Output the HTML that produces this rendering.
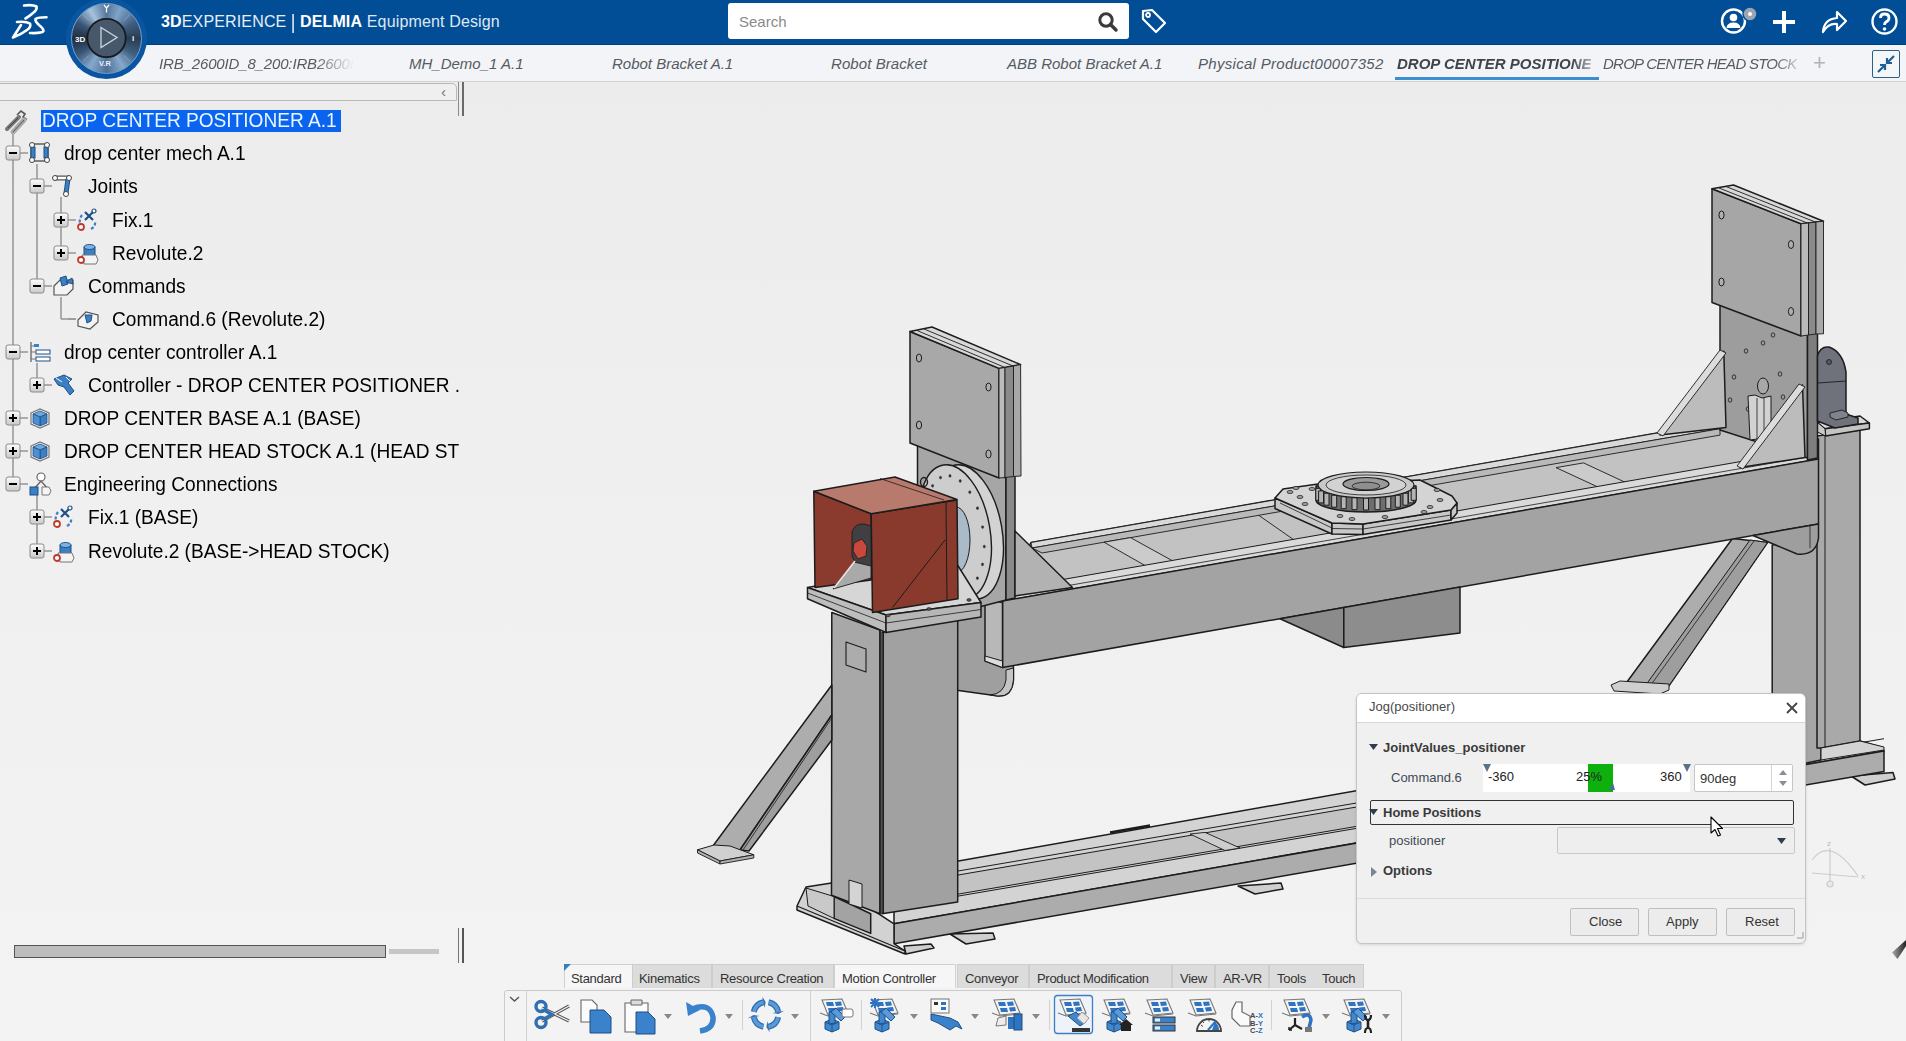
<!DOCTYPE html>
<html><head><meta charset="utf-8">
<style>
*{margin:0;padding:0;box-sizing:border-box}
html,body{width:1906px;height:1041px;overflow:hidden;background:linear-gradient(180deg,#ebebeb 0px,#efefef 400px,#f3f3f3 1041px);font-family:"Liberation Sans",sans-serif}
.a{position:absolute}
.tab{position:absolute;top:55px;font:italic 15px "Liberation Sans",sans-serif;color:#555b63;white-space:nowrap}
.tree{position:absolute;font:20px "Liberation Sans",sans-serif;color:#000;white-space:nowrap;transform:scaleX(0.955);transform-origin:0 0}
.btab{position:absolute;top:971px;font:13px "Liberation Sans",sans-serif;color:#333;white-space:nowrap;letter-spacing:-0.3px}
</style>

</head><body>
<svg class="a" style="left:0;top:0" width="1906" height="1041" viewBox="0 0 1906 1041"><polygon points="1851.0,776.0 1893.0,772.5 1895.0,779.0 1865.0,785.0" fill="#cfcfcf" stroke="#1c1c1c" stroke-width="1.5" stroke-linejoin="round" /><polygon points="950.0,934.0 993.0,933.0 995.0,939.0 966.0,944.0" fill="#cfcfcf" stroke="#1c1c1c" stroke-width="1.5" stroke-linejoin="round" /><polygon points="1238.0,886.0 1281.0,883.0 1283.0,889.0 1255.0,894.0" fill="#cfcfcf" stroke="#1c1c1c" stroke-width="1.5" stroke-linejoin="round" /><polygon points="904.0,946.0 931.0,944.0 934.0,948.0 906.0,954.0" fill="#cfcfcf" stroke="#1c1c1c" stroke-width="1.5" stroke-linejoin="round" /><polygon points="957.0,861.2 1772.0,717.3 1860.0,741.0 1882.0,747.5 1884.0,750.9 894.0,923.8 894.0,905.0" fill="#d3d3d3" stroke="#1c1c1c" stroke-width="1.5" stroke-linejoin="round" /><polygon points="957.0,875.2 1772.0,736.1 1772.0,755.8 957.0,894.3" fill="#c3c3c3" stroke="#1c1c1c" stroke-width="1.0" stroke-linejoin="round" /><line x1="957.0" y1="871.2" x2="1772.0" y2="732.1" stroke="#1c1c1c" stroke-width="1.0"/><line x1="894.0" y1="907.0" x2="1884.0" y2="738.7" stroke="#1c1c1c" stroke-width="1.0"/><polygon points="1190.0,834.0 1205.0,832.4 1240.0,848.0 1225.0,850.5" fill="#cdcdcd" stroke="#1c1c1c" stroke-width="0.9" stroke-linejoin="round" /><polygon points="894.0,923.8 1884.0,750.9 1884.0,771.4 894.0,943.7" fill="#acacac" stroke="#1c1c1c" stroke-width="1.5" stroke-linejoin="round" /><line x1="1110.0" y1="832.5" x2="1150.0" y2="825.5" stroke="#1c1c1c" stroke-width="2.5"/><polygon points="797.0,906.0 806.0,887.0 831.5,883.0 894.0,923.8 894.0,943.7 905.0,951.0 905.0,954.0 797.0,910.0" fill="#d2d2d2" stroke="#1c1c1c" stroke-width="1.5" stroke-linejoin="round" /><polygon points="834.0,896.5 870.7,913.8 870.7,933.4 834.0,918.4" fill="#a3a3a3" stroke="#1c1c1c" stroke-width="1.5" stroke-linejoin="round" /><polygon points="806.0,888.0 834.0,896.5 834.0,918.4 808.0,906.0" fill="#c9c9c9" stroke="#1c1c1c" stroke-width="1.0" stroke-linejoin="round" /><line x1="797.0" y1="906.0" x2="905.0" y2="951.0" stroke="#1c1c1c" stroke-width="1.2"/><polygon points="1732.5,538.5 1767.5,542.5 1666.0,690.0 1622.5,688.0" fill="#adadad" stroke="#1c1c1c" stroke-width="1.5" stroke-linejoin="round" /><polygon points="1750.0,540.0 1767.5,542.5 1666.0,690.0 1643.0,689.0" fill="#9e9e9e" stroke="#1c1c1c" stroke-width="1.0" stroke-linejoin="round" /><line x1="1754.0" y1="541.0" x2="1648.0" y2="689.0" stroke="#1c1c1c" stroke-width="0.8"/><polygon points="1611.0,685.0 1620.0,681.0 1669.0,684.0 1669.0,690.0 1660.0,694.0 1614.0,691.0" fill="#cfcfcf" stroke="#1c1c1c" stroke-width="1.0" stroke-linejoin="round" /><polygon points="1772.2,545.0 1821.0,535.0 1821.0,760.0 1772.2,770.0" fill="#a6a6a6" stroke="#1c1c1c" stroke-width="1.5" stroke-linejoin="round" /><polygon points="1817.0,436.0 1860.0,430.0 1860.0,741.0 1821.0,748.0 1817.0,748.0" fill="#a9a9a9" stroke="#1c1c1c" stroke-width="1.5" stroke-linejoin="round" /><line x1="1825.0" y1="436.0" x2="1825.0" y2="747.0" stroke="#1c1c1c" stroke-width="1.0"/><polygon points="1817.5,422.5 1860.0,416.0 1869.4,423.0 1825.0,428.8" fill="#dadada" stroke="#1c1c1c" stroke-width="1.5" stroke-linejoin="round" /><polygon points="1825.0,428.8 1869.4,423.0 1869.4,428.8 1825.6,436.0" fill="#c4c4c4" stroke="#1c1c1c" stroke-width="1.5" stroke-linejoin="round" /><polygon points="1817.5,422.5 1825.0,428.8 1825.6,436.0 1817.5,432.0" fill="#c8c8c8" stroke="#1c1c1c" stroke-width="1.0" stroke-linejoin="round" /><polygon points="1860.0,741.0 1884.0,747.0 1884.0,750.0 1821.0,760.0 1821.0,748.0" fill="#d3d3d3" stroke="#1c1c1c" stroke-width="1.0" stroke-linejoin="round" /><path d="M950,600 L1006,598 L1013.5,668 L1013.5,680 Q1012,697 998,696 L955,690 Z" fill="#9f9f9f" stroke="#1c1c1c" stroke-width="1.5" stroke-linejoin="round"/><path d="M1006,670 L1013.5,668 L1013.5,680 Q1012,697 998,696 L990,695 Q1004,694 1006,680 Z" fill="#c4c4c4" stroke="#1c1c1c" stroke-width="1.0" stroke-linejoin="round"/><polygon points="1031.0,542.5 1720.0,422.1 1818.5,439.0 1818.5,459.0 1002.5,601.0 1002.5,596.0" fill="#c2c2c2" stroke="#1c1c1c" stroke-width="1.5" stroke-linejoin="round" /><polygon points="1031.0,542.5 1720.0,422.1 1720.0,428.7 1032.0,548.0" fill="#d9d9d9" stroke="#1c1c1c" stroke-width="0.9" stroke-linejoin="round" /><polygon points="1032.0,548.0 1720.0,428.7 1720.0,435.1 1042.0,553.0" fill="#b9b9b9" stroke="#1c1c1c" stroke-width="0.9" stroke-linejoin="round" /><polygon points="1104.0,542.2 1130.5,537.6 1175.0,562.2 1147.5,566.9" fill="#cbcbcb" stroke="#1c1c1c" stroke-width="0.9" stroke-linejoin="round" /><line x1="1258.7" y1="515.3" x2="1297.7" y2="542.5" stroke="#1c1c1c" stroke-width="0.9"/><polygon points="1556.0,467.6 1583.5,462.9 1631.0,485.0 1603.5,489.6" fill="#cbcbcb" stroke="#1c1c1c" stroke-width="0.9" stroke-linejoin="round" /><polygon points="1002.5,590.0 1818.5,448.0 1818.5,459.0 1002.5,601.0" fill="#dadada" stroke="#1c1c1c" stroke-width="1.0" stroke-linejoin="round" /><line x1="1002.5" y1="597.0" x2="1818.5" y2="455.0" stroke="#1c1c1c" stroke-width="0.8"/><polygon points="1002.5,601.0 1818.5,459.0 1818.5,524.0 1002.5,667.5" fill="#a3a3a3" stroke="#1c1c1c" stroke-width="1.5" stroke-linejoin="round" /><polygon points="985.0,596.0 1002.5,601.0 1002.5,667.5 985.0,661.0" fill="#b8b8b8" stroke="#1c1c1c" stroke-width="1.5" stroke-linejoin="round" /><polygon points="985.0,656.0 1002.5,661.0 1002.5,667.5 985.0,661.0" fill="#dcdcdc" stroke="#1c1c1c" stroke-width="1.0" stroke-linejoin="round" /><line x1="985.0" y1="598.0" x2="1002.5" y2="603.0" stroke="#1c1c1c" stroke-width="1.0"/><polygon points="1280.0,618.7 1343.8,607.5 1343.8,647.5" fill="#8b8b8b" stroke="#1c1c1c" stroke-width="1.5" stroke-linejoin="round" /><polygon points="1343.8,607.5 1460.0,587.0 1460.0,633.0 1343.8,647.5" fill="#8d8d8d" stroke="#1c1c1c" stroke-width="1.5" stroke-linejoin="round" /><path d="M1753,535.5 L1818.5,524.0 L1818.5,538 Q1816,556 1797,554 Z" fill="#9e9e9e" stroke="#1c1c1c" stroke-width="1.5" stroke-linejoin="round"/><line x1="1810.0" y1="525.5" x2="1810.0" y2="548.0" stroke="#1c1c1c" stroke-width="0.8"/><polygon points="1275.0,498.0 1332.0,523.0 1332.0,534.0 1275.0,508.5" fill="#c8c8c8" stroke="#1c1c1c" stroke-width="1.5" stroke-linejoin="round" /><polygon points="1332.0,523.0 1363.0,524.0 1363.0,534.5 1332.0,534.0" fill="#c8c8c8" stroke="#1c1c1c" stroke-width="1.5" stroke-linejoin="round" /><polygon points="1363.0,524.0 1451.0,510.0 1451.0,520.0 1363.0,534.5" fill="#c8c8c8" stroke="#1c1c1c" stroke-width="1.5" stroke-linejoin="round" /><polygon points="1451.0,510.0 1457.0,503.0 1457.0,513.0 1451.0,520.0" fill="#c8c8c8" stroke="#1c1c1c" stroke-width="1.5" stroke-linejoin="round" /><polygon points="1283.0,489.0 1318.0,484.0 1420.0,480.0 1452.0,496.0 1457.0,503.0 1451.0,510.0 1363.0,524.0 1332.0,523.0 1275.0,498.0" fill="#d4d4d4" stroke="#1c1c1c" stroke-width="1.5" stroke-linejoin="round" /><line x1="1280.0" y1="503.0" x2="1332.0" y2="528.0" stroke="#1c1c1c" stroke-width="0.8"/><line x1="1332.0" y1="528.5" x2="1363.0" y2="529.0" stroke="#1c1c1c" stroke-width="0.8"/><line x1="1363.0" y1="529.0" x2="1451.0" y2="515.0" stroke="#1c1c1c" stroke-width="0.8"/><path d="M1316,486 L1316,500 A50,12 0 0 0 1416,500 L1416,486 Z" fill="#6e6e6e" stroke="#1c1c1c" stroke-width="1.5" stroke-linejoin="round"/><polygon points="1315.8,488.3 1320.8,488.3 1320.8,500.3 1315.8,500.3" fill="#b4b4b4" stroke="#1c1c1c" stroke-width="1.0" stroke-linejoin="round" /><polygon points="1318.6,490.9 1323.6,490.9 1323.6,502.9 1318.6,502.9" fill="#b4b4b4" stroke="#1c1c1c" stroke-width="1.0" stroke-linejoin="round" /><polygon points="1324.0,493.2 1329.0,493.2 1329.0,505.2 1324.0,505.2" fill="#b4b4b4" stroke="#1c1c1c" stroke-width="1.0" stroke-linejoin="round" /><polygon points="1331.7,495.2 1336.7,495.2 1336.7,507.2 1331.7,507.2" fill="#b4b4b4" stroke="#1c1c1c" stroke-width="1.0" stroke-linejoin="round" /><polygon points="1341.2,496.7 1346.2,496.7 1346.2,508.7 1341.2,508.7" fill="#b4b4b4" stroke="#1c1c1c" stroke-width="1.0" stroke-linejoin="round" /><polygon points="1352.0,497.7 1357.0,497.7 1357.0,509.7 1352.0,509.7" fill="#b4b4b4" stroke="#1c1c1c" stroke-width="1.0" stroke-linejoin="round" /><polygon points="1363.5,498.0 1368.5,498.0 1368.5,510.0 1363.5,510.0" fill="#b4b4b4" stroke="#1c1c1c" stroke-width="1.0" stroke-linejoin="round" /><polygon points="1375.0,497.7 1380.0,497.7 1380.0,509.7 1375.0,509.7" fill="#b4b4b4" stroke="#1c1c1c" stroke-width="1.0" stroke-linejoin="round" /><polygon points="1385.8,496.7 1390.8,496.7 1390.8,508.7 1385.8,508.7" fill="#b4b4b4" stroke="#1c1c1c" stroke-width="1.0" stroke-linejoin="round" /><polygon points="1395.3,495.2 1400.3,495.2 1400.3,507.2 1395.3,507.2" fill="#b4b4b4" stroke="#1c1c1c" stroke-width="1.0" stroke-linejoin="round" /><polygon points="1403.0,493.2 1408.0,493.2 1408.0,505.2 1403.0,505.2" fill="#b4b4b4" stroke="#1c1c1c" stroke-width="1.0" stroke-linejoin="round" /><polygon points="1408.4,490.9 1413.4,490.9 1413.4,502.9 1408.4,502.9" fill="#b4b4b4" stroke="#1c1c1c" stroke-width="1.0" stroke-linejoin="round" /><polygon points="1411.2,488.3 1416.2,488.3 1416.2,500.3 1411.2,500.3" fill="#b4b4b4" stroke="#1c1c1c" stroke-width="1.0" stroke-linejoin="round" /><ellipse cx="1366" cy="485" rx="48" ry="13" fill="#c9c9c9" stroke="#1c1c1c" stroke-width="1.2"/><ellipse cx="1366" cy="485" rx="40" ry="10" fill="#d2d2d2" stroke="#1c1c1c" stroke-width="0.8"/><ellipse cx="1366" cy="484" rx="23" ry="6.5" fill="#9a9a9a" stroke="#1c1c1c" stroke-width="1.2"/><ellipse cx="1366" cy="486" rx="14" ry="3.8" fill="#8f8f8f" stroke="#1c1c1c" stroke-width="0.8"/><ellipse cx="1290" cy="492" rx="3" ry="1.6" fill="#9a9a9a" stroke="#1c1c1c" stroke-width="0.7"/><ellipse cx="1300" cy="497" rx="3" ry="1.6" fill="#9a9a9a" stroke="#1c1c1c" stroke-width="0.7"/><ellipse cx="1296" cy="488" rx="3" ry="1.6" fill="#9a9a9a" stroke="#1c1c1c" stroke-width="0.7"/><ellipse cx="1312" cy="489" rx="3" ry="1.6" fill="#9a9a9a" stroke="#1c1c1c" stroke-width="0.7"/><ellipse cx="1305" cy="504" rx="3" ry="1.6" fill="#9a9a9a" stroke="#1c1c1c" stroke-width="0.7"/><ellipse cx="1340" cy="516" rx="3" ry="1.6" fill="#9a9a9a" stroke="#1c1c1c" stroke-width="0.7"/><ellipse cx="1352" cy="519" rx="3" ry="1.6" fill="#9a9a9a" stroke="#1c1c1c" stroke-width="0.7"/><ellipse cx="1385" cy="517" rx="3" ry="1.6" fill="#9a9a9a" stroke="#1c1c1c" stroke-width="0.7"/><ellipse cx="1430" cy="507" rx="3" ry="1.6" fill="#9a9a9a" stroke="#1c1c1c" stroke-width="0.7"/><ellipse cx="1440" cy="500" rx="3" ry="1.6" fill="#9a9a9a" stroke="#1c1c1c" stroke-width="0.7"/><ellipse cx="1437" cy="490" rx="3" ry="1.6" fill="#9a9a9a" stroke="#1c1c1c" stroke-width="0.7"/><ellipse cx="1424" cy="512" rx="3" ry="1.6" fill="#9a9a9a" stroke="#1c1c1c" stroke-width="0.7"/><polygon points="1720.0,300.0 1807.5,330.0 1807.5,458.0 1720.0,430.0" fill="#9d9d9d" stroke="#1c1c1c" stroke-width="1.5" stroke-linejoin="round" /><ellipse cx="1746" cy="351" rx="1.8" ry="2.2" fill="#9d9d9d" stroke="#1c1c1c" stroke-width="0.8"/><ellipse cx="1763" cy="343" rx="1.8" ry="2.2" fill="#9d9d9d" stroke="#1c1c1c" stroke-width="0.8"/><ellipse cx="1773" cy="335" rx="1.8" ry="2.2" fill="#9d9d9d" stroke="#1c1c1c" stroke-width="0.8"/><ellipse cx="1734" cy="377" rx="1.8" ry="2.2" fill="#9d9d9d" stroke="#1c1c1c" stroke-width="0.8"/><ellipse cx="1730" cy="400" rx="1.8" ry="2.2" fill="#9d9d9d" stroke="#1c1c1c" stroke-width="0.8"/><ellipse cx="1780" cy="374" rx="1.8" ry="2.2" fill="#9d9d9d" stroke="#1c1c1c" stroke-width="0.8"/><ellipse cx="1783" cy="397" rx="1.8" ry="2.2" fill="#9d9d9d" stroke="#1c1c1c" stroke-width="0.8"/><ellipse cx="1748" cy="409" rx="1.8" ry="2.2" fill="#9d9d9d" stroke="#1c1c1c" stroke-width="0.8"/><ellipse cx="1763" cy="386" rx="5.5" ry="8" fill="#a8a8a8" stroke="#1c1c1c" stroke-width="1.0"/><polygon points="1748.0,396.0 1755.0,395.0 1762.0,398.0 1771.0,396.0 1771.0,437.0 1750.0,440.0" fill="#d2d2d2" stroke="#1c1c1c" stroke-width="1.0" stroke-linejoin="round" /><line x1="1757.0" y1="398.0" x2="1757.0" y2="439.0" stroke="#1c1c1c" stroke-width="0.8"/><line x1="1764.0" y1="398.0" x2="1764.0" y2="438.0" stroke="#1c1c1c" stroke-width="0.8"/><polygon points="1807.5,224.0 1817.5,222.0 1817.5,458.0 1807.5,460.0" fill="#7e7e7e" stroke="#1c1c1c" stroke-width="1.5" stroke-linejoin="round" /><polygon points="1712.0,188.8 1801.0,223.8 1801.0,336.0 1712.0,302.5" fill="#a6a6a6" stroke="#1c1c1c" stroke-width="1.5" stroke-linejoin="round" /><polygon points="1712.0,188.8 1733.5,185.0 1823.5,221.2 1801.0,223.8" fill="#d8d8d8" stroke="#1c1c1c" stroke-width="1.5" stroke-linejoin="round" /><line x1="1719.0" y1="188.0" x2="1808.0" y2="223.3" stroke="#1c1c1c" stroke-width="0.9"/><line x1="1726.0" y1="186.5" x2="1816.0" y2="222.3" stroke="#1c1c1c" stroke-width="0.9"/><polygon points="1801.0,223.8 1808.5,223.0 1808.5,335.0 1801.0,336.0" fill="#b9b9b9" stroke="#1c1c1c" stroke-width="0.9" stroke-linejoin="round" /><polygon points="1808.5,223.0 1816.0,222.0 1816.0,334.0 1808.5,335.0" fill="#8a8a8a" stroke="#1c1c1c" stroke-width="0.9" stroke-linejoin="round" /><polygon points="1816.0,222.0 1823.5,221.2 1823.5,333.8 1816.0,334.0" fill="#a9a9a9" stroke="#1c1c1c" stroke-width="0.9" stroke-linejoin="round" /><ellipse cx="1721.5" cy="215" rx="2.6" ry="4" fill="#b0b0b0" stroke="#1c1c1c" stroke-width="1.0"/><ellipse cx="1791" cy="244.5" rx="2.6" ry="4" fill="#b0b0b0" stroke="#1c1c1c" stroke-width="1.0"/><ellipse cx="1721.5" cy="282" rx="2.6" ry="4" fill="#b0b0b0" stroke="#1c1c1c" stroke-width="1.0"/><ellipse cx="1791" cy="311.5" rx="2.6" ry="4" fill="#b0b0b0" stroke="#1c1c1c" stroke-width="1.0"/><polygon points="1723.8,351.2 1660.0,435.0 1726.0,427.5" fill="#bcbcbc" stroke="#1c1c1c" stroke-width="1.5" stroke-linejoin="round" /><polygon points="1720.0,350.0 1726.0,353.0 1663.0,436.0 1657.0,433.0" fill="#dcdcdc" stroke="#1c1c1c" stroke-width="0.9" stroke-linejoin="round" /><polygon points="1802.5,385.0 1740.0,467.5 1805.0,457.5" fill="#bcbcbc" stroke="#1c1c1c" stroke-width="1.5" stroke-linejoin="round" /><polygon points="1799.0,384.0 1805.0,387.0 1743.0,469.0 1737.0,466.0" fill="#dcdcdc" stroke="#1c1c1c" stroke-width="0.9" stroke-linejoin="round" /><path d="M1817.5,421 L1817.5,356 Q1820,346 1829,347 Q1843,352 1846,372 L1846,414 L1858,418 L1858,424 L1835,428 Z" fill="#6f727a" stroke="#1c1c1c" stroke-width="1.5" stroke-linejoin="round"/><line x1="1818.0" y1="383.0" x2="1846.0" y2="381.0" stroke="#1c1c1c" stroke-width="0.9"/><ellipse cx="1829" cy="362" rx="2.5" ry="2.5" fill="#55585e" stroke="#1c1c1c" stroke-width="0.8"/><polygon points="1830.0,413.0 1842.0,410.0 1848.0,413.0 1848.0,417.0 1836.0,420.0 1830.0,417.0" fill="#80838a" stroke="#1c1c1c" stroke-width="0.9" stroke-linejoin="round" /><polygon points="917.5,440.0 1006.0,478.0 1006.0,600.0 960.0,612.0 917.5,600.0" fill="#a6a6a6" stroke="#1c1c1c" stroke-width="1.5" stroke-linejoin="round" /><polygon points="1006.0,372.0 1015.0,370.0 1015.0,598.0 1006.0,600.0" fill="#8a8a8a" stroke="#1c1c1c" stroke-width="1.5" stroke-linejoin="round" /><polygon points="1015.0,531.0 1015.0,596.0 1072.5,587.5" fill="#b2b2b2" stroke="#1c1c1c" stroke-width="1.5" stroke-linejoin="round" /><polygon points="910.0,331.5 999.0,368.4 999.0,478.0 910.0,443.0" fill="#a8a8a8" stroke="#1c1c1c" stroke-width="1.5" stroke-linejoin="round" /><polygon points="910.0,331.5 932.0,327.0 1020.6,364.6 999.0,368.4" fill="#d8d8d8" stroke="#1c1c1c" stroke-width="1.5" stroke-linejoin="round" /><line x1="917.0" y1="330.5" x2="1005.0" y2="367.5" stroke="#1c1c1c" stroke-width="0.9"/><line x1="924.0" y1="329.0" x2="1013.0" y2="366.0" stroke="#1c1c1c" stroke-width="0.9"/><polygon points="999.0,368.4 1005.0,367.5 1005.0,477.5 999.0,478.0" fill="#bbbbbb" stroke="#1c1c1c" stroke-width="0.9" stroke-linejoin="round" /><polygon points="1005.0,367.5 1013.5,366.0 1013.5,476.5 1005.0,477.5" fill="#8a8a8a" stroke="#1c1c1c" stroke-width="0.9" stroke-linejoin="round" /><polygon points="1013.5,366.0 1020.6,364.6 1021.0,476.0 1013.5,476.5" fill="#a8a8a8" stroke="#1c1c1c" stroke-width="0.9" stroke-linejoin="round" /><ellipse cx="919" cy="358" rx="2.6" ry="4" fill="#acacac" stroke="#1c1c1c" stroke-width="1.0"/><ellipse cx="988.5" cy="387" rx="2.6" ry="4" fill="#acacac" stroke="#1c1c1c" stroke-width="1.0"/><ellipse cx="919" cy="425" rx="2.6" ry="4" fill="#acacac" stroke="#1c1c1c" stroke-width="1.0"/><ellipse cx="988.5" cy="454" rx="2.6" ry="4" fill="#acacac" stroke="#1c1c1c" stroke-width="1.0"/><ellipse cx="967" cy="532" rx="35" ry="68" fill="#d3d3d3" stroke="#1c1c1c" stroke-width="1.4" transform="rotate(-10 967 532)"/><ellipse cx="955" cy="532" rx="35" ry="68" fill="#cdcdcd" stroke="#1c1c1c" stroke-width="1.4" transform="rotate(-10 955 532)"/><ellipse cx="982.6" cy="527.1" rx="1.1" ry="1.4" fill="#333" stroke="#1c1c1c" stroke-width="0.4"/><ellipse cx="984.3" cy="546.6" rx="1.1" ry="1.4" fill="#333" stroke="#1c1c1c" stroke-width="0.4"/><ellipse cx="982.5" cy="564.4" rx="1.1" ry="1.4" fill="#333" stroke="#1c1c1c" stroke-width="0.4"/><ellipse cx="977.4" cy="578.2" rx="1.1" ry="1.4" fill="#333" stroke="#1c1c1c" stroke-width="0.4"/><ellipse cx="969.5" cy="586.4" rx="1.1" ry="1.4" fill="#333" stroke="#1c1c1c" stroke-width="0.4"/><ellipse cx="960.0" cy="588.1" rx="1.1" ry="1.4" fill="#333" stroke="#1c1c1c" stroke-width="0.4"/><ellipse cx="949.8" cy="583.0" rx="1.1" ry="1.4" fill="#333" stroke="#1c1c1c" stroke-width="0.4"/><ellipse cx="940.2" cy="571.8" rx="1.1" ry="1.4" fill="#333" stroke="#1c1c1c" stroke-width="0.4"/><ellipse cx="932.5" cy="555.8" rx="1.1" ry="1.4" fill="#333" stroke="#1c1c1c" stroke-width="0.4"/><ellipse cx="927.4" cy="536.9" rx="1.1" ry="1.4" fill="#333" stroke="#1c1c1c" stroke-width="0.4"/><ellipse cx="925.7" cy="517.4" rx="1.1" ry="1.4" fill="#333" stroke="#1c1c1c" stroke-width="0.4"/><ellipse cx="927.5" cy="499.6" rx="1.1" ry="1.4" fill="#333" stroke="#1c1c1c" stroke-width="0.4"/><ellipse cx="932.6" cy="485.8" rx="1.1" ry="1.4" fill="#333" stroke="#1c1c1c" stroke-width="0.4"/><ellipse cx="940.5" cy="477.6" rx="1.1" ry="1.4" fill="#333" stroke="#1c1c1c" stroke-width="0.4"/><ellipse cx="950.0" cy="475.9" rx="1.1" ry="1.4" fill="#333" stroke="#1c1c1c" stroke-width="0.4"/><ellipse cx="960.2" cy="481.0" rx="1.1" ry="1.4" fill="#333" stroke="#1c1c1c" stroke-width="0.4"/><ellipse cx="969.8" cy="492.2" rx="1.1" ry="1.4" fill="#333" stroke="#1c1c1c" stroke-width="0.4"/><ellipse cx="977.5" cy="508.2" rx="1.1" ry="1.4" fill="#333" stroke="#1c1c1c" stroke-width="0.4"/><ellipse cx="956" cy="540" rx="14" ry="33" fill="#a9bac8" stroke="#1c1c1c" stroke-width="1.0"/><polygon points="831.8,612.5 880.0,630.0 880.0,913.8 831.5,895.3" fill="#a8a8a8" stroke="#1c1c1c" stroke-width="1.5" stroke-linejoin="round" /><polygon points="882.0,632.5 957.7,619.5 957.7,902.0 882.0,913.8" fill="#a1a1a1" stroke="#1c1c1c" stroke-width="1.5" stroke-linejoin="round" /><line x1="880.0" y1="630.0" x2="880.0" y2="913.8" stroke="#1c1c1c" stroke-width="1.4"/><line x1="883.5" y1="632.0" x2="883.5" y2="913.5" stroke="#1c1c1c" stroke-width="1.0"/><polygon points="846.0,642.0 866.0,649.0 866.0,672.0 846.0,665.0" fill="#acacac" stroke="#1c1c1c" stroke-width="1.1" stroke-linejoin="round" /><polygon points="849.0,880.0 862.0,884.0 862.0,908.0 849.0,904.0" fill="#d4d4d4" stroke="#1c1c1c" stroke-width="1.0" stroke-linejoin="round" /><polygon points="807.5,587.5 955.0,561.0 981.0,602.5 886.0,615.0" fill="#d6d6d6" stroke="#1c1c1c" stroke-width="1.5" stroke-linejoin="round" /><polygon points="807.5,587.5 886.0,615.0 886.0,632.5 807.5,598.8" fill="#bdbdbd" stroke="#1c1c1c" stroke-width="1.5" stroke-linejoin="round" /><polygon points="886.0,615.0 981.0,602.5 981.0,617.0 886.0,632.5" fill="#b6b6b6" stroke="#1c1c1c" stroke-width="1.5" stroke-linejoin="round" /><line x1="807.5" y1="593.0" x2="886.0" y2="623.0" stroke="#1c1c1c" stroke-width="0.8"/><line x1="886.0" y1="623.0" x2="981.0" y2="609.5" stroke="#1c1c1c" stroke-width="0.8"/><ellipse cx="888" cy="615.5" rx="2.2" ry="1.4" fill="#555" stroke="#1c1c1c" stroke-width="0.6"/><ellipse cx="969" cy="600" rx="2.2" ry="1.4" fill="#555" stroke="#1c1c1c" stroke-width="0.6"/><ellipse cx="929" cy="609" rx="2.2" ry="1.4" fill="#555" stroke="#1c1c1c" stroke-width="0.6"/><polygon points="813.8,491.2 871.2,513.8 871.2,580.0 815.0,587.5" fill="#8b3b2e" stroke="#1c1c1c" stroke-width="1.5" stroke-linejoin="round" /><path d="M852,532 Q855,523 864,524 L871.25,526 L871.25,570 Q858,572 852,556 Z" fill="#404042" stroke="#1c1c1c" stroke-width="0.9" stroke-linejoin="round"/><polygon points="854.0,543.0 862.0,539.0 867.0,546.0 866.0,556.0 858.0,559.0 853.0,551.0" fill="#c9473b" stroke="#1c1c1c" stroke-width="0.8" stroke-linejoin="round" /><polygon points="833.0,589.0 854.0,562.0 871.0,566.0 871.0,578.0" fill="#a9a9a9" stroke="#1c1c1c" stroke-width="0.9" stroke-linejoin="round" /><line x1="834.0" y1="588.0" x2="855.0" y2="561.0" stroke="#e6e6e6" stroke-width="1.6"/><polygon points="871.2,513.8 957.0,500.0 958.0,598.8 872.5,612.5" fill="#893a2d" stroke="#1c1c1c" stroke-width="1.5" stroke-linejoin="round" /><line x1="892.5" y1="607.5" x2="945.0" y2="540.0" stroke="#1c1c1c" stroke-width="1.0"/><line x1="946.0" y1="501.5" x2="947.0" y2="600.0" stroke="#1c1c1c" stroke-width="1.0"/><polygon points="813.8,491.2 895.0,477.0 957.0,499.5 871.2,513.8" fill="#b97a6e" stroke="#1c1c1c" stroke-width="1.5" stroke-linejoin="round" /><line x1="880.0" y1="478.5" x2="944.0" y2="500.0" stroke="#1c1c1c" stroke-width="0.8"/><ellipse cx="924" cy="482" rx="3.5" ry="4.5" fill="none" stroke="#1c1c1c" stroke-width="1.4"/><polygon points="831.8,685.0 831.8,715.0 740.0,850.0 710.0,850.0" fill="#adadad" stroke="#1c1c1c" stroke-width="1.5" stroke-linejoin="round" /><polygon points="831.8,715.0 831.8,740.0 749.0,851.0 740.0,850.0" fill="#9e9e9e" stroke="#1c1c1c" stroke-width="1.5" stroke-linejoin="round" /><line x1="831.8" y1="718.0" x2="743.0" y2="850.0" stroke="#1c1c1c" stroke-width="0.8"/><polygon points="697.5,849.8 714.0,845.0 730.0,846.0 753.8,854.8 720.0,861.0" fill="#d0d0d0" stroke="#1c1c1c" stroke-width="1.0" stroke-linejoin="round" /><polygon points="697.5,849.8 720.0,861.0 720.0,864.0 697.5,853.0" fill="#b0b0b0" stroke="#1c1c1c" stroke-width="0.9" stroke-linejoin="round" /><polygon points="720.0,861.0 753.8,854.8 753.8,858.0 720.0,864.0" fill="#b0b0b0" stroke="#1c1c1c" stroke-width="0.9" stroke-linejoin="round" /><g stroke="#c8c8c8" stroke-width="1.2" fill="none" opacity="0.9"><path d="M1812,860 Q1830,835 1858,876"/><line x1="1830" y1="848" x2="1830" y2="885"/><line x1="1812" y1="873" x2="1858" y2="877"/><circle cx="1830" cy="884" r="3" fill="#e8e8e8"/></g><text x="1827" y="846" font-size="8" fill="#bbb" font-family="Liberation Sans">z</text><text x="1861" y="879" font-size="8" fill="#bbb" font-family="Liberation Sans">x</text></svg>
<!-- HEADER -->
<div class="a" style="left:0;top:0;width:1906px;height:45px;background:#024e96;border-bottom:1px solid #013f7c"></div>
<div class="a" style="left:0;top:45px;width:1906px;height:37px;background:#f2f4f7;border-bottom:1px solid #d0d3d6"></div>
<!-- 3DS logo -->
<svg class="a" style="left:0;top:0" width="60" height="45" viewBox="0 0 60 45">
<g fill="none" stroke="#fff" stroke-linecap="round" stroke-linejoin="round">
<path d="M24,5.5 Q33,4.5 36.5,6.5 Q37.5,10 33,13 Q29,16.5 25.5,18.5" stroke-width="2.6"/>
<path d="M17,22 Q26,21 30,23.5 Q31.5,27 27,30 Q21,34.5 13,37.5 L21,25" stroke-width="2.6"/>
<path d="M46.5,17.3 Q38,17.3 35.5,19 Q35,21.5 39,25 Q43.5,28.5 43.5,31 Q42,33.5 30,33" stroke-width="2.6"/>
</g></svg>
<!-- compass -->
<div class="a" style="left:66px;top:-2px;width:81px;height:81px;border-radius:50%;background:#0a55a0"></div>
<div class="a" style="left:71px;top:3px;width:71px;height:71px;border-radius:50%;border:1px solid #6f9fd0;background:conic-gradient(from 0deg,#54769a 0deg,#7fa3c6 25deg,#3f5f80 60deg,#2a3c52 90deg,#3f5f80 120deg,#86a9cb 150deg,#4f7193 180deg,#86a9cb 210deg,#3a5778 240deg,#1f2d3d 270deg,#3a5778 300deg,#a6c3de 330deg,#54769a 360deg)"></div>
<svg class="a" style="left:64px;top:-4px" width="86" height="86" viewBox="0 0 86 86">
<g stroke="#a9c4de" stroke-width="0.8" opacity="0.7"><line x1="19" y1="18.5" x2="25" y2="24.5"/><line x1="66" y1="18.5" x2="60" y2="24.5"/><line x1="19" y1="65.5" x2="25" y2="59.5"/><line x1="66" y1="65.5" x2="60" y2="59.5"/></g>
<circle cx="42.5" cy="42" r="19.2" fill="#48586b" stroke="#161a20" stroke-width="1.8"/>
<path d="M37,31.5 L53,41.5 L37,51.5 Z" fill="none" stroke="#c9d6e3" stroke-width="1.3"/>
<text x="11" y="45.5" font-size="8" font-weight="bold" fill="#fff" font-family="Liberation Sans">3D</text>
<text x="35" y="70" font-size="7.5" font-weight="bold" fill="#eef" font-family="Liberation Sans">V.R</text>
<text x="68" y="45" font-size="8" font-weight="bold" fill="#fff" font-family="Liberation Sans">i</text>
<path d="M40,9 L42.5,12 L45,9 M42.5,12 L42.5,16.5" stroke="#fff" stroke-width="1.3" fill="none"/>
</svg>
<div class="a" style="left:161px;top:13px;font:16px 'Liberation Sans',sans-serif;color:#fff;letter-spacing:0.15px;white-space:nowrap"><b>3D</b><span style="color:#e6eef8">EXPERIENCE</span> <span style="display:inline-block;transform:scaleY(1.3)">|</span> <b>DELMIA</b> <span style="color:#dfe8f3">Equipment Design</span></div>
<!-- search -->
<div class="a" style="left:728px;top:3px;width:401px;height:36px;background:#fff;border-radius:3px"></div>
<div class="a" style="left:739px;top:13px;font:15px 'Liberation Sans',sans-serif;color:#8a8a8a">Search</div>
<svg class="a" style="left:1097px;top:11px" width="22" height="22" viewBox="0 0 22 22"><circle cx="9" cy="9" r="6.2" fill="none" stroke="#3a3a3a" stroke-width="3"/><path d="M13.5,13.5 L19,19" stroke="#3a3a3a" stroke-width="3.4" stroke-linecap="round"/></svg>
<!-- tag -->
<svg class="a" style="left:1140px;top:7px" width="28" height="28" viewBox="0 0 28 28"><path d="M3,4 L12,3 L25,16 L16,25 L3,12 Z" fill="none" stroke="#fff" stroke-width="2.2" stroke-linejoin="round"/><circle cx="8" cy="8" r="2" fill="none" stroke="#fff" stroke-width="1.8"/></svg>
<!-- right icons -->
<svg class="a" style="left:1716px;top:3px" width="44" height="36" viewBox="0 0 44 36">
<circle cx="17.5" cy="18" r="11.5" fill="none" stroke="#fff" stroke-width="2.4"/>
<circle cx="17.5" cy="14.5" r="3.8" fill="#fff"/><path d="M10.5,25 Q11,19.5 17.5,19.5 Q24,19.5 24.5,25 Z" fill="#fff"/>
<circle cx="34" cy="11" r="7" fill="#9aa5b1" stroke="#004f9b" stroke-width="1.5"/><circle cx="34" cy="11" r="2" fill="#fff"/>
</svg>
<svg class="a" style="left:1770px;top:8px" width="28" height="28" viewBox="0 0 28 28"><path d="M14,3 L14,25 M3,14 L25,14" stroke="#fff" stroke-width="4"/></svg>
<svg class="a" style="left:1819px;top:7px" width="30" height="30" viewBox="0 0 30 30"><path d="M4,25 Q5,12 18,11 L18,5 L27,14 L18,23 L18,17 Q9,16 4,25 Z" fill="none" stroke="#fff" stroke-width="2.2" stroke-linejoin="round"/></svg>
<svg class="a" style="left:1870px;top:7px" width="30" height="30" viewBox="0 0 30 30"><circle cx="14.5" cy="14.5" r="12" fill="none" stroke="#fff" stroke-width="2.4"/><path d="M10.5,11 Q10.5,7 14.5,7 Q19,7 19,11 Q19,13.5 16,15 Q14.5,16 14.5,18" fill="none" stroke="#fff" stroke-width="2.8"/><circle cx="14.5" cy="22" r="1.8" fill="#fff"/></svg>
<!-- tabs -->
<div class="tab" style="left:159px;letter-spacing:-0.15px;-webkit-mask-image:linear-gradient(90deg,#000 80%,transparent 100%)">IRB_2600ID_8_200:IRB2600I</div>
<div class="tab" style="left:409px">MH_Demo_1 A.1</div>
<div class="tab" style="left:612px">Robot Bracket A.1</div>
<div class="tab" style="left:831px;letter-spacing:0.08px">Robot Bracket</div>
<div class="tab" style="left:1007px">ABB Robot Bracket A.1</div>
<div class="tab" style="left:1198px;letter-spacing:0.3px">Physical Product00007352</div>
<div class="tab" style="left:1397px;font-weight:bold;color:#3f444b;-webkit-mask-image:linear-gradient(90deg,#000 90%,rgba(0,0,0,.4) 100%)">DROP CENTER POSITIONE</div>
<div class="a" style="left:1395px;top:77px;width:204px;height:3px;background:#3a8fd0"></div>
<div class="tab" style="left:1603px;letter-spacing:-0.75px;-webkit-mask-image:linear-gradient(90deg,#000 88%,rgba(0,0,0,.3) 100%)">DROP CENTER HEAD STOCK</div>
<div class="a" style="left:1813px;top:50px;font:22px 'Liberation Sans';color:#b0b3b8">+</div>
<div class="a" style="left:1872px;top:50px;width:28px;height:28px;border:1.5px solid #2a5f8c;border-radius:2px;background:#f4f6f8"></div>
<svg class="a" style="left:1872px;top:50px" width="28" height="28" viewBox="0 0 28 28"><path d="M22,6 L15,13 M15,8 L15,13 L20,13 M6,22 L13,15 M8,15 L13,15 L13,20" stroke="#1d5f96" stroke-width="2.2" fill="none"/></svg>
<!-- panel top bar -->
<div class="a" style="left:-2px;top:83px;width:459px;height:18px;border:1px solid #b8b8b8;border-top-right-radius:5px;background:#efefef"></div>
<div class="a" style="left:441px;top:83px;font:15px 'Liberation Sans';color:#6a7580">&#8249;</div>
<div class="a" style="left:458px;top:82px;width:1px;height:34px;background:#8a8a8a"></div>
<div class="a" style="left:462px;top:82px;width:2px;height:34px;background:#6a6a6a"></div>
<!-- bottom scrollbar -->
<div class="a" style="left:389px;top:949px;width:50px;height:5px;background:#c6c6c6"></div>
<div class="a" style="left:14px;top:945px;width:372px;height:13px;background:#bdbdbd;border:1px solid #555"></div>
<div class="a" style="left:458px;top:928px;width:1px;height:35px;background:#777"></div>
<div class="a" style="left:462px;top:928px;width:2px;height:35px;background:#555"></div>

<svg class="a" style="left:0;top:95px" width="470" height="480" viewBox="0 95 470 480"><defs><linearGradient id="bx" x1="0" y1="0" x2="0" y2="1"><stop offset="0" stop-color="#fdfdfd"/><stop offset="1" stop-color="#c9c9c9"/></linearGradient></defs><g stroke="#9a9a9a" stroke-width="1.6"><line x1="13" y1="131" x2="13" y2="484"/><line x1="37" y1="164" x2="37" y2="286"/><line x1="61" y1="197" x2="61" y2="253"/><line x1="37" y1="363" x2="37" y2="385"/><line x1="37" y1="495" x2="37" y2="551"/><line x1="61" y1="297" x2="61" y2="319"/><line x1="61" y1="319" x2="76" y2="319"/></g><g transform="translate(4,108)"><path d="M3,21 L15,9" stroke="#777" stroke-width="4" stroke-linecap="round"/><path d="M13,7 L17,3 L21,6 L19,9 L22,11 L18,14" fill="none" stroke="#555" stroke-width="1.6"/><path d="M9,24 L20,12" stroke="#aaa" stroke-width="5" stroke-linecap="round"/><path d="M9,24 L20,12" stroke="#555" stroke-width="1" fill="none"/><path d="M4,20 L14,10" stroke="#444" stroke-width="1"/></g><line x1="20" y1="153" x2="28" y2="153" stroke="#9a9a9a" stroke-width="1.6"/><rect x="6" y="146" width="14" height="14" rx="2" fill="url(#bx)" stroke="#8a8a8a" stroke-width="1"/><path d="M9,153 L17,153" stroke="#000" stroke-width="2"/><g transform="translate(28,141)"><rect x="3" y="3" width="17" height="17" fill="none" stroke="#555" stroke-width="1.4"/><rect x="3" y="6" width="4" height="11" fill="#3b7fc4" stroke="#1d4f85"/><rect x="16" y="6" width="4" height="11" fill="#3b7fc4" stroke="#1d4f85"/><circle cx="4" cy="4" r="2.5" fill="#fff" stroke="#444"/><circle cx="19" cy="4" r="2.5" fill="#fff" stroke="#444"/><circle cx="4" cy="19" r="2.5" fill="#fff" stroke="#444"/><circle cx="19" cy="19" r="2.5" fill="#fff" stroke="#444"/></g><line x1="44" y1="186" x2="52" y2="186" stroke="#9a9a9a" stroke-width="1.6"/><rect x="30" y="179" width="14" height="14" rx="2" fill="url(#bx)" stroke="#8a8a8a" stroke-width="1"/><path d="M33,186 L41,186" stroke="#000" stroke-width="2"/><g transform="translate(52,174)"><path d="M3,4 L17,4" stroke="#555" stroke-width="5"/><path d="M3,4 L17,4" stroke="#fff" stroke-width="2.5"/><path d="M16,5 L14,19" stroke="#1d4f85" stroke-width="5"/><path d="M16,5 L14,19" stroke="#3b7fc4" stroke-width="3"/><circle cx="3" cy="4" r="2.5" fill="#fff" stroke="#444"/><circle cx="17" cy="4" r="2.5" fill="#fff" stroke="#444"/><circle cx="14" cy="20" r="2.5" fill="#fff" stroke="#444"/></g><line x1="68" y1="220" x2="76" y2="220" stroke="#9a9a9a" stroke-width="1.6"/><rect x="54" y="213" width="14" height="14" rx="2" fill="url(#bx)" stroke="#8a8a8a" stroke-width="1"/><path d="M57,220 L65,220" stroke="#000" stroke-width="2"/><path d="M61,216 L61,224" stroke="#000" stroke-width="2"/><g transform="translate(76,208)"><path d="M6,7 Q1,14 7,20" fill="none" stroke="#3b7fc4" stroke-width="2.2" stroke-dasharray="3 2"/><path d="M15,21 Q20,18 19,13" fill="none" stroke="#3b7fc4" stroke-width="2.2" stroke-dasharray="3 2"/><path d="M9,4 L17,12 M17,4 L9,12" stroke="#1d4f85" stroke-width="2.2"/><circle cx="18" cy="3" r="2" fill="#fff" stroke="#1d4f85" stroke-width="1.2"/><circle cx="5" cy="19" r="3" fill="#fff" stroke="#c0392b" stroke-width="1.8"/></g><line x1="68" y1="253" x2="76" y2="253" stroke="#9a9a9a" stroke-width="1.6"/><rect x="54" y="246" width="14" height="14" rx="2" fill="url(#bx)" stroke="#8a8a8a" stroke-width="1"/><path d="M57,253 L65,253" stroke="#000" stroke-width="2"/><path d="M61,249 L61,257" stroke="#000" stroke-width="2"/><g transform="translate(76,241)"><path d="M8,6 L8,14 Q13,18 19,14 L19,6" fill="#3b7fc4" stroke="#1d4f85"/><ellipse cx="13.5" cy="6" rx="5.5" ry="2.5" fill="#7fb2e0" stroke="#1d4f85"/><path d="M6,14 L20,14 L22,19 L20,23 L8,23 Z" fill="#f4f4f4" stroke="#777"/><circle cx="5" cy="19" r="3" fill="#fff" stroke="#c0392b" stroke-width="1.8"/></g><line x1="44" y1="286" x2="52" y2="286" stroke="#9a9a9a" stroke-width="1.6"/><rect x="30" y="279" width="14" height="14" rx="2" fill="url(#bx)" stroke="#8a8a8a" stroke-width="1"/><path d="M33,286 L41,286" stroke="#000" stroke-width="2"/><g transform="translate(52,274)"><path d="M2,12 L8,6 L21,6 L21,15 L15,21 L2,21 Z" fill="#f4f4f4" stroke="#555" stroke-width="1.2"/><path d="M8,4 L14,2 L16,10 L10,12 Z" fill="#3b7fc4" stroke="#1d4f85"/><path d="M14,8 L20,4 L21,10 Z" fill="#3b7fc4" stroke="#1d4f85"/></g><line x1="68" y1="319" x2="76" y2="319" stroke="#9a9a9a" stroke-width="1.6"/><g transform="translate(76,307)"><path d="M2,13 L10,5 L22,8 L22,15 L14,22 L2,19 Z" fill="#f4f4f4" stroke="#555" stroke-width="1.2"/><path d="M9,8 L16,8 L15,14 L11,16 Z" fill="#3b7fc4" stroke="#1d4f85"/></g><line x1="20" y1="352" x2="28" y2="352" stroke="#9a9a9a" stroke-width="1.6"/><rect x="6" y="345" width="14" height="14" rx="2" fill="url(#bx)" stroke="#8a8a8a" stroke-width="1"/><path d="M9,352 L17,352" stroke="#000" stroke-width="2"/><g transform="translate(28,340)"><path d="M3,2 L3,22" stroke="#777" stroke-width="1.5"/><rect x="6" y="4" width="5" height="3" fill="#3b7fc4"/><rect x="8" y="10" width="14" height="4" fill="#fff" stroke="#1d4f85"/><rect x="8" y="17" width="14" height="4" fill="#fff" stroke="#1d4f85"/><path d="M3,6 L6,6 M3,12 L8,12 M3,19 L8,19" stroke="#777"/></g><line x1="44" y1="385" x2="52" y2="385" stroke="#9a9a9a" stroke-width="1.6"/><rect x="30" y="378" width="14" height="14" rx="2" fill="url(#bx)" stroke="#8a8a8a" stroke-width="1"/><path d="M33,385 L41,385" stroke="#000" stroke-width="2"/><path d="M37,381 L37,389" stroke="#000" stroke-width="2"/><g transform="translate(52,373)"><path d="M2,6 L12,2 L20,6 L16,10 L22,18 L18,22 L12,14 L6,12 Z" fill="#3b7fc4" stroke="#1d4f85"/><path d="M4,5 L10,9 M14,4 L18,8" stroke="#fff" stroke-width="1"/></g><line x1="20" y1="418" x2="28" y2="418" stroke="#9a9a9a" stroke-width="1.6"/><rect x="6" y="411" width="14" height="14" rx="2" fill="url(#bx)" stroke="#8a8a8a" stroke-width="1"/><path d="M9,418 L17,418" stroke="#000" stroke-width="2"/><path d="M13,414 L13,422" stroke="#000" stroke-width="2"/><g transform="translate(28,406)"><path d="M3,7 L12,3 L21,7 L21,18 L12,22 L3,18 Z" fill="#f3f3f3" stroke="#777" stroke-width="1.2"/><path d="M5,8 L12,5 L19,8 L12,11 Z" fill="#6fa8dc" stroke="#1d4f85" stroke-width="0.8"/><path d="M12,11 L19,8 L19,17 L12,20 Z" fill="#3b7fc4" stroke="#1d4f85" stroke-width="0.8"/><path d="M5,8 L12,11 L12,20 L5,17 Z" fill="#4d8fd0" stroke="#1d4f85" stroke-width="0.8"/></g><line x1="20" y1="451" x2="28" y2="451" stroke="#9a9a9a" stroke-width="1.6"/><rect x="6" y="444" width="14" height="14" rx="2" fill="url(#bx)" stroke="#8a8a8a" stroke-width="1"/><path d="M9,451 L17,451" stroke="#000" stroke-width="2"/><path d="M13,447 L13,455" stroke="#000" stroke-width="2"/><g transform="translate(28,439)"><path d="M3,7 L12,3 L21,7 L21,18 L12,22 L3,18 Z" fill="#f3f3f3" stroke="#777" stroke-width="1.2"/><path d="M5,8 L12,5 L19,8 L12,11 Z" fill="#6fa8dc" stroke="#1d4f85" stroke-width="0.8"/><path d="M12,11 L19,8 L19,17 L12,20 Z" fill="#3b7fc4" stroke="#1d4f85" stroke-width="0.8"/><path d="M5,8 L12,11 L12,20 L5,17 Z" fill="#4d8fd0" stroke="#1d4f85" stroke-width="0.8"/></g><line x1="20" y1="484" x2="28" y2="484" stroke="#9a9a9a" stroke-width="1.6"/><rect x="6" y="477" width="14" height="14" rx="2" fill="url(#bx)" stroke="#8a8a8a" stroke-width="1"/><path d="M9,484 L17,484" stroke="#000" stroke-width="2"/><g transform="translate(28,472)"><circle cx="13" cy="5" r="4" fill="#fff" stroke="#666" stroke-width="1.2"/><path d="M5,18 L13,9 L21,18" fill="none" stroke="#666" stroke-width="1.4"/><rect x="2" y="15" width="8" height="8" fill="#3b7fc4" stroke="#1d4f85"/><path d="M14,15 L21,15 L23,19 L21,23 L14,23 Z" fill="#f4f4f4" stroke="#777"/></g><line x1="44" y1="517" x2="52" y2="517" stroke="#9a9a9a" stroke-width="1.6"/><rect x="30" y="510" width="14" height="14" rx="2" fill="url(#bx)" stroke="#8a8a8a" stroke-width="1"/><path d="M33,517 L41,517" stroke="#000" stroke-width="2"/><path d="M37,513 L37,521" stroke="#000" stroke-width="2"/><g transform="translate(52,505)"><path d="M6,7 Q1,14 7,20" fill="none" stroke="#3b7fc4" stroke-width="2.2" stroke-dasharray="3 2"/><path d="M15,21 Q20,18 19,13" fill="none" stroke="#3b7fc4" stroke-width="2.2" stroke-dasharray="3 2"/><path d="M9,4 L17,12 M17,4 L9,12" stroke="#1d4f85" stroke-width="2.2"/><circle cx="18" cy="3" r="2" fill="#fff" stroke="#1d4f85" stroke-width="1.2"/><circle cx="5" cy="19" r="3" fill="#fff" stroke="#c0392b" stroke-width="1.8"/></g><line x1="44" y1="551" x2="52" y2="551" stroke="#9a9a9a" stroke-width="1.6"/><rect x="30" y="544" width="14" height="14" rx="2" fill="url(#bx)" stroke="#8a8a8a" stroke-width="1"/><path d="M33,551 L41,551" stroke="#000" stroke-width="2"/><path d="M37,547 L37,555" stroke="#000" stroke-width="2"/><g transform="translate(52,539)"><path d="M8,6 L8,14 Q13,18 19,14 L19,6" fill="#3b7fc4" stroke="#1d4f85"/><ellipse cx="13.5" cy="6" rx="5.5" ry="2.5" fill="#7fb2e0" stroke="#1d4f85"/><path d="M6,14 L20,14 L22,19 L20,23 L8,23 Z" fill="#f4f4f4" stroke="#777"/><circle cx="5" cy="19" r="3" fill="#fff" stroke="#c0392b" stroke-width="1.8"/></g></svg>
<div class="a" style="left:41px;top:110px;width:300px;height:22px;background:#0a64f0"></div>
<div class="tree" style="left:42px;top:109px;color:#e8f6ff">DROP CENTER POSITIONER A.1</div>
<div class="tree" style="left:64px;top:142px">drop center mech A.1</div>
<div class="tree" style="left:88px;top:175px">Joints</div>
<div class="tree" style="left:112px;top:209px">Fix.1</div>
<div class="tree" style="left:112px;top:242px">Revolute.2</div>
<div class="tree" style="left:88px;top:275px">Commands</div>
<div class="tree" style="left:112px;top:308px">Command.6 (Revolute.2)</div>
<div class="tree" style="left:64px;top:341px">drop center controller A.1</div>
<div class="tree" style="left:88px;top:374px">Controller - DROP CENTER POSITIONER .</div>
<div class="tree" style="left:64px;top:407px">DROP CENTER BASE A.1 (BASE)</div>
<div class="tree" style="left:64px;top:440px">DROP CENTER HEAD STOCK A.1 (HEAD ST</div>
<div class="tree" style="left:64px;top:473px">Engineering Connections</div>
<div class="tree" style="left:88px;top:506px">Fix.1 (BASE)</div>
<div class="tree" style="left:88px;top:540px">Revolute.2 (BASE-&gt;HEAD STOCK)</div>
<div class="a" style="left:1356px;top:693px;width:450px;height:251px;background:#f0f0f0;border:1px solid #c4c4c4;border-radius:6px;box-shadow:0 1px 3px rgba(0,0,0,.12);overflow:hidden">
 <div class="a" style="left:0;top:0;width:448px;height:29px;background:#fff;border-bottom:1px solid #d6d6d6"></div>
</div>
<div class="a" style="left:1369px;top:699px;font:13px 'Liberation Sans';color:#4a4a4a">Jog(positioner)</div>
<svg class="a" style="left:1785px;top:701px" width="14" height="14" viewBox="0 0 14 14"><path d="M2,2 L12,12 M12,2 L2,12" stroke="#444" stroke-width="1.8"/></svg>
<svg class="a" style="left:1368px;top:742px" width="12" height="10" viewBox="0 0 12 10"><path d="M1,2 L10,2 L5.5,8 Z" fill="#2f3d4c"/></svg>
<div class="a" style="left:1383px;top:740px;font:bold 13px 'Liberation Sans';color:#3a3a3a">JointValues_positioner</div>
<div class="a" style="left:1391px;top:770px;font:13px 'Liberation Sans';color:#3f4a55">Command.6</div>
<div class="a" style="left:1483px;top:764px;width:207px;height:28px;background:#fff"></div>
<div class="a" style="left:1588px;top:764px;width:25px;height:28px;background:#0db00d"></div>
<svg class="a" style="left:1482px;top:763px" width="210" height="30" viewBox="0 0 210 30"><path d="M1,1 L9,1 L5,9 Z" fill="#5a7288"/><path d="M201,1 L209,1 L205,9 Z" fill="#5a7288"/><path d="M127,27 L131,20 L133,27 Z" fill="#4a6f9a"/></svg>
<div class="a" style="left:1488px;top:769px;font:13px 'Liberation Sans';color:#222">-360</div>
<div class="a" style="left:1576px;top:769px;font:13px 'Liberation Sans';color:#222">25%</div>
<div class="a" style="left:1660px;top:769px;font:13px 'Liberation Sans';color:#222">360</div>
<div class="a" style="left:1694px;top:764px;width:99px;height:28px;background:#fff;border:1px solid #c6c6c6;border-radius:2px"></div>
<div class="a" style="left:1771px;top:765px;width:1px;height:26px;background:#d4d4d4"></div>
<svg class="a" style="left:1776px;top:767px" width="14" height="22" viewBox="0 0 14 22"><path d="M3,8 L11,8 L7,3 Z M3,14 L11,14 L7,19 Z" fill="#8a8f95"/></svg>
<div class="a" style="left:1700px;top:771px;font:13px 'Liberation Sans';color:#333">90deg</div>
<div class="a" style="left:1370px;top:800px;width:424px;height:25px;border:1px solid #333;border-radius:2px"></div>
<svg class="a" style="left:1368px;top:807px" width="12" height="10" viewBox="0 0 12 10"><path d="M1,2 L10,2 L5.5,8 Z" fill="#2f3d4c"/></svg>
<div class="a" style="left:1383px;top:805px;font:bold 13px 'Liberation Sans';color:#3a3a3a">Home Positions</div>
<div class="a" style="left:1389px;top:833px;font:13px 'Liberation Sans';color:#3f4a55">positioner</div>
<div class="a" style="left:1557px;top:827px;width:238px;height:27px;background:#eeeeee;border:1px solid #c8c8c8;border-radius:2px"></div>
<svg class="a" style="left:1776px;top:836px" width="12" height="10" viewBox="0 0 12 10"><path d="M1,2 L10,2 L5.5,8 Z" fill="#2f3d4c"/></svg>
<svg class="a" style="left:1369px;top:866px" width="10" height="12" viewBox="0 0 10 12"><path d="M2,1 L8,6 L2,11 Z" fill="#7a8590"/></svg>
<div class="a" style="left:1383px;top:863px;font:bold 13px 'Liberation Sans';color:#3a3a3a">Options</div>
<div class="a" style="left:1357px;top:898px;width:448px;height:1px;background:#dcdcdc"></div>
<div class="a" style="left:1570px;top:908px;width:69px;height:28px;background:#ececec;border:1px solid #bfbfbf;border-radius:2px"></div>
<div class="a" style="left:1648px;top:908px;width:69px;height:28px;background:#ececec;border:1px solid #bfbfbf;border-radius:2px"></div>
<div class="a" style="left:1726px;top:908px;width:69px;height:28px;background:#ececec;border:1px solid #bfbfbf;border-radius:2px"></div>
<div class="a" style="left:1589px;top:914px;font:13px 'Liberation Sans';color:#333">Close</div>
<div class="a" style="left:1666px;top:914px;font:13px 'Liberation Sans';color:#333">Apply</div>
<div class="a" style="left:1745px;top:914px;font:13px 'Liberation Sans';color:#333">Reset</div>
<!-- cursor -->
<svg class="a" style="left:1710px;top:816px" width="16" height="24" viewBox="0 0 16 24"><path d="M1,1 L1,17 L5,13.5 L8,20 L10.5,19 L7.5,12.5 L12.5,12.5 Z" fill="#fff" stroke="#000" stroke-width="1.1" stroke-linejoin="round"/></svg>
<svg class="a" style="left:1885px;top:935px" width="21" height="28" viewBox="1885 935 21 28"><defs><linearGradient id="ptr" x1="0" y1="0" x2="1" y2="0"><stop offset="0" stop-color="#aaa"/><stop offset="1" stop-color="#222"/></linearGradient></defs><path d="M1892,952.5 L1906,940 L1906,946 L1897.5,959 Z" fill="url(#ptr)"/></svg>
<svg class="a" style="left:1795px;top:930px" width="10" height="10" viewBox="0 0 10 10"><path d="M8,2 L8,8 L2,8" fill="none" stroke="#9a9a9a" stroke-width="1"/></svg>

<!-- bottom tabs -->
<div class="a" style="left:564px;top:964px;width:69px;height:24px;background:#f6f6f6;border:1px solid #d0d0d0;border-bottom:none"></div>
<svg class="a" style="left:564px;top:964px" width="8" height="8"><path d="M0,0 L7,0 L0,7 Z" fill="#3a7cc4"/></svg>
<div class="a" style="left:632px;top:964px;width:80px;height:24px;background:#dcdcdc;border:1px solid #cdcdcd;border-bottom:none"></div>
<div class="a" style="left:712px;top:964px;width:122px;height:24px;background:#dcdcdc;border:1px solid #cdcdcd;border-bottom:none"></div>
<div class="a" style="left:834px;top:964px;width:122px;height:24px;background:#f6f6f6;border:1px solid #d0d0d0;border-bottom:none"></div>
<div class="a" style="left:957px;top:964px;width:72px;height:24px;background:#dcdcdc;border:1px solid #cdcdcd;border-bottom:none"></div>
<div class="a" style="left:1029px;top:964px;width:143px;height:24px;background:#dcdcdc;border:1px solid #cdcdcd;border-bottom:none"></div>
<div class="a" style="left:1172px;top:964px;width:43px;height:24px;background:#dcdcdc;border:1px solid #cdcdcd;border-bottom:none"></div>
<div class="a" style="left:1215px;top:964px;width:54px;height:24px;background:#dcdcdc;border:1px solid #cdcdcd;border-bottom:none"></div>
<div class="a" style="left:1269px;top:964px;width:95px;height:24px;background:#dcdcdc;border:1px solid #cdcdcd;border-bottom:none"></div>
<div class="btab" style="left:571px">Standard</div>
<div class="btab" style="left:639px">Kinematics</div>
<div class="btab" style="left:720px">Resource Creation</div>
<div class="btab" style="left:842px">Motion Controller</div>
<div class="btab" style="left:965px">Conveyor</div>
<div class="btab" style="left:1037px">Product Modification</div>
<div class="btab" style="left:1180px">View</div>
<div class="btab" style="left:1223px">AR-VR</div>
<div class="btab" style="left:1277px">Tools</div>
<div class="btab" style="left:1322px">Touch</div>
<!-- toolbar -->
<div class="a" style="left:504px;top:990px;width:898px;height:60px;background:#f3f3f3;border:1px solid #cbcbcb;border-radius:3px"></div>
<svg class="a" style="left:504px;top:990px" width="900" height="51" viewBox="504 990 900 51">
<defs>
<g id="pend">
 <path d="M2,2 L22,1 L28,15 L8,17 Z" fill="#f4f4f4" stroke="#777" stroke-width="1.1"/>
 <path d="M6,4 L13,4 L14,8 L7,8 Z M15,4 L21,3.5 L22,7.5 L16,8 Z M8,10 L15,10 L16,14 L9,14 Z M17,9.5 L23,9 L24,13 L18,13.5 Z" fill="#2e74c0"/>
 <path d="M0,15 L8,18 L28,16" fill="none" stroke="#777" stroke-width="1.1"/>
</g>
<g id="arm">
 <path d="M5,24 L12,21 L19,24 L19,31 L12,34 L5,31 Z" fill="#3f88cf" stroke="#1f4f86" stroke-width="1"/>
 <path d="M5,24 L12,27 L19,24 M12,27 L12,34" fill="none" stroke="#1f4f86" stroke-width="0.9"/>
 <path d="M9,14 L15,13 L15,25 L9,26 Z" fill="#3f88cf" stroke="#1f4f86" stroke-width="1"/>
 <path d="M11,14 L16,10 L25,19 L21,23 Z" fill="#5a9ad8" stroke="#1f4f86" stroke-width="1"/>
</g>
</defs>
<line x1="526.5" y1="991" x2="526.5" y2="1041" stroke="#d2d2d2"/>
<line x1="742.5" y1="1000" x2="742.5" y2="1030" stroke="#d2d2d2"/>
<line x1="810.5" y1="991" x2="810.5" y2="1041" stroke="#d2d2d2"/>
<line x1="861.5" y1="1000" x2="861.5" y2="1030" stroke="#d2d2d2"/>
<line x1="1049.5" y1="1000" x2="1049.5" y2="1030" stroke="#d2d2d2"/>
<line x1="1271.5" y1="1000" x2="1271.5" y2="1030" stroke="#d2d2d2"/>
<path d="M510,997 L514.5,1001 L519,997" fill="none" stroke="#555" stroke-width="1.4"/>
<!-- scissors -->
<g transform="translate(533,999)"><path d="M9,9 L36,22 M9,22 L36,7" stroke="#555" stroke-width="3.2"/><path d="M9,9 L36,22 M9,22 L36,7" stroke="#f4f4f4" stroke-width="1.2"/><circle cx="8" cy="7.5" r="5" fill="none" stroke="#2f6fb2" stroke-width="3.4"/><circle cx="8" cy="23.5" r="5" fill="none" stroke="#2f6fb2" stroke-width="3.4"/><path d="M11,11 L19,15.5 L11,20" stroke="#2f6fb2" stroke-width="3.2" fill="none"/></g>
<!-- copy -->
<g transform="translate(580,998)"><path d="M1,2 L12,2 L17,7 L17,24 L1,24 Z" fill="#fbfbfb" stroke="#666" stroke-width="1.1"/><path d="M10,12 L24,12 L31,19 L31,35 L10,35 Z" fill="#3a82cc" stroke="#1f4f86" stroke-width="1"/></g>
<!-- paste -->
<g transform="translate(624,998)"><path d="M1,5 L24,5 L24,34 L1,34 Z" fill="#fbfbfb" stroke="#666" stroke-width="1.1"/><path d="M7,2 L18,2 L18,7 L7,7 Z" fill="#ddd" stroke="#666"/><path d="M12,14 L24,14 L31,21 L31,36 L12,36 Z" fill="#3a82cc" stroke="#1f4f86" stroke-width="1"/></g>
<path d="M664,1014 L672,1014 L668,1019 Z" fill="#888"/>
<!-- undo -->
<g transform="translate(686,1000)"><path d="M6,9 Q24,2 27,17 Q28,29 14,31" fill="none" stroke="#3a82cc" stroke-width="5.5"/><path d="M0,2 L2,16 L14,10 Z" fill="#3a82cc"/></g>
<path d="M725,1014 L733,1014 L729,1019 Z" fill="#888"/>
<!-- refresh -->
<g><path d="M768.6,1002.3 A12.5,12.5 0 0 1 778.2,1011.9" fill="none" stroke="#2f6fb2" stroke-width="6"/><path d="M768.6,1002.3 A12.5,12.5 0 0 1 778.2,1011.9" fill="none" stroke="#5a9ad8" stroke-width="3.5"/><path d="M784.1,1010.7 L778.5,1014.1 L772.4,1013.1 Z" fill="#2f6fb2"/><path d="M778.2,1017.1 A12.5,12.5 0 0 1 768.6,1026.7" fill="none" stroke="#2f6fb2" stroke-width="6"/><path d="M778.2,1017.1 A12.5,12.5 0 0 1 768.6,1026.7" fill="none" stroke="#5a9ad8" stroke-width="3.5"/><path d="M769.8,1032.6 L766.4,1027.0 L767.4,1020.9 Z" fill="#2f6fb2"/><path d="M763.4,1026.7 A12.5,12.5 0 0 1 753.8,1017.1" fill="none" stroke="#2f6fb2" stroke-width="6"/><path d="M763.4,1026.7 A12.5,12.5 0 0 1 753.8,1017.1" fill="none" stroke="#5a9ad8" stroke-width="3.5"/><path d="M747.9,1018.3 L753.5,1014.9 L759.6,1015.9 Z" fill="#2f6fb2"/><path d="M753.8,1011.9 A12.5,12.5 0 0 1 763.4,1002.3" fill="none" stroke="#2f6fb2" stroke-width="6"/><path d="M753.8,1011.9 A12.5,12.5 0 0 1 763.4,1002.3" fill="none" stroke="#5a9ad8" stroke-width="3.5"/><path d="M762.2,996.4 L765.6,1002.0 L764.6,1008.1 Z" fill="#2f6fb2"/></g>
<path d="M791,1014 L799,1014 L795,1019 Z" fill="#888"/>
<!-- motion icons -->
<g transform="translate(820,998)"><use href="#pend"/><use href="#arm"/><rect x="22" y="11" width="11" height="8" rx="2" fill="#fff" stroke="#777"/></g>
<g transform="translate(870,998)"><use href="#pend"/><use href="#arm"/><path d="M1,1 L9,9 M9,1 L1,9 M5,0 L5,10 M0,5 L10,5" stroke="#2e74c0" stroke-width="2"/></g>
<path d="M910,1014 L918,1014 L914,1019 Z" fill="#888"/>
<g transform="translate(930,998)"><rect x="1" y="1" width="18" height="14" fill="#fafafa" stroke="#777"/><rect x="4" y="4" width="4" height="3" fill="#333"/><rect x="11" y="4" width="5" height="3" fill="#2e74c0"/><rect x="11" y="9" width="5" height="3" fill="#2e74c0"/><path d="M1,16 L20,20 L28,24 L32,31 L26,28 L20,32 L8,25 L1,22 Z" fill="#3a82cc" stroke="#1f4f86"/></g>
<path d="M971,1014 L979,1014 L975,1019 Z" fill="#888"/>
<g transform="translate(992,998)"><use href="#pend"/><path d="M6,20 L14,18 L14,27 L4,28 Z" fill="#eee" stroke="#777"/><rect x="16" y="19" width="7" height="12" fill="#2e74c0"/><rect x="22" y="16" width="8" height="16" fill="#2e74c0" stroke="#1f4f86"/></g>
<path d="M1032,1014 L1040,1014 L1036,1019 Z" fill="#888"/>
<!-- active -->
<rect x="1054.5" y="995.5" width="38" height="38" rx="3" fill="#eef3f9" stroke="#3b7fc6" stroke-width="1.3"/>
<g transform="translate(1058,998)"><use href="#pend"/><path d="M10,18 L18,14 L28,24 L22,28 Z" fill="#3f88cf" stroke="#1f4f86"/><path d="M24,14 L31,20 L26,26 L19,20 Z" fill="#e6e6e6" stroke="#999"/><rect x="14" y="30" width="18" height="4" fill="#333"/></g>
<g transform="translate(1102,998)"><use href="#pend"/><use href="#arm"/><path d="M17,27 L24,21 L31,27 L29,27 L29,33 L19,33 L19,27 Z" fill="#222"/></g>
<g transform="translate(1145,998)"><use href="#pend"/><rect x="8" y="19" width="22" height="6" fill="#3a82cc" stroke="#333"/><rect x="8" y="27" width="22" height="6" fill="#3a82cc" stroke="#333"/><rect x="10" y="20.5" width="5" height="3" fill="#eee"/><rect x="10" y="28.5" width="5" height="3" fill="#eee"/></g>
<g transform="translate(1188,998)"><use href="#pend"/><path d="M9,33 A12,12 0 0 1 33,33 Z" fill="#f6f6f6" stroke="#444" stroke-width="1.8"/><path d="M27,24 A10,10 0 0 1 31,32 L24,32 Z" fill="#2e74c0"/><path d="M13,27 L15,28.5 M21,21 L21,23.5 M14,23 L16,25" stroke="#444" stroke-width="1"/><path d="M20,32 L28,23" stroke="#2e74c0" stroke-width="2.2"/></g>
<g transform="translate(1230,998)"><path d="M6,4 L12,4 L12,14 L20,18 L20,28 L10,28 L2,20 L2,12 Z" fill="#fafafa" stroke="#666" stroke-width="1.2"/><text x="20" y="20" font-size="7.5" font-weight="bold" font-family="Liberation Sans" fill="#444">A-<tspan fill="#2e74c0">X</tspan></text><text x="20" y="27.5" font-size="7.5" font-weight="bold" font-family="Liberation Sans" fill="#444">B-<tspan fill="#2e74c0">Y</tspan></text><text x="20" y="35" font-size="7.5" font-weight="bold" font-family="Liberation Sans" fill="#444">C-<tspan fill="#2e74c0">Z</tspan></text></g>
<g transform="translate(1282,998)"><use href="#pend"/><path d="M13,20 L13,27 M13,27 L7,32 M13,27 L20,31" stroke="#222" stroke-width="2.2"/><path d="M7,32 L7,29 M7,32 L10,32" stroke="#222" stroke-width="1.5"/><path d="M20,19 Q28,14 29,22 L27,30" fill="none" stroke="#2e74c0" stroke-width="3.5"/><rect x="23" y="29" width="7" height="5" fill="#777"/></g>
<path d="M1322,1014 L1330,1014 L1326,1019 Z" fill="#888"/>
<g transform="translate(1342,998)"><use href="#pend"/><use href="#arm"/><path d="M26,21 L26,31" stroke="#222" stroke-width="2.6"/><path d="M23,17 Q23,22 26,22 Q29,22 29,17" fill="none" stroke="#222" stroke-width="2.2"/><path d="M23,35 Q23,30 26,30 Q29,30 29,35" fill="none" stroke="#222" stroke-width="2.2"/></g>
<path d="M1382,1014 L1390,1014 L1386,1019 Z" fill="#888"/>
</svg>

</body></html>
